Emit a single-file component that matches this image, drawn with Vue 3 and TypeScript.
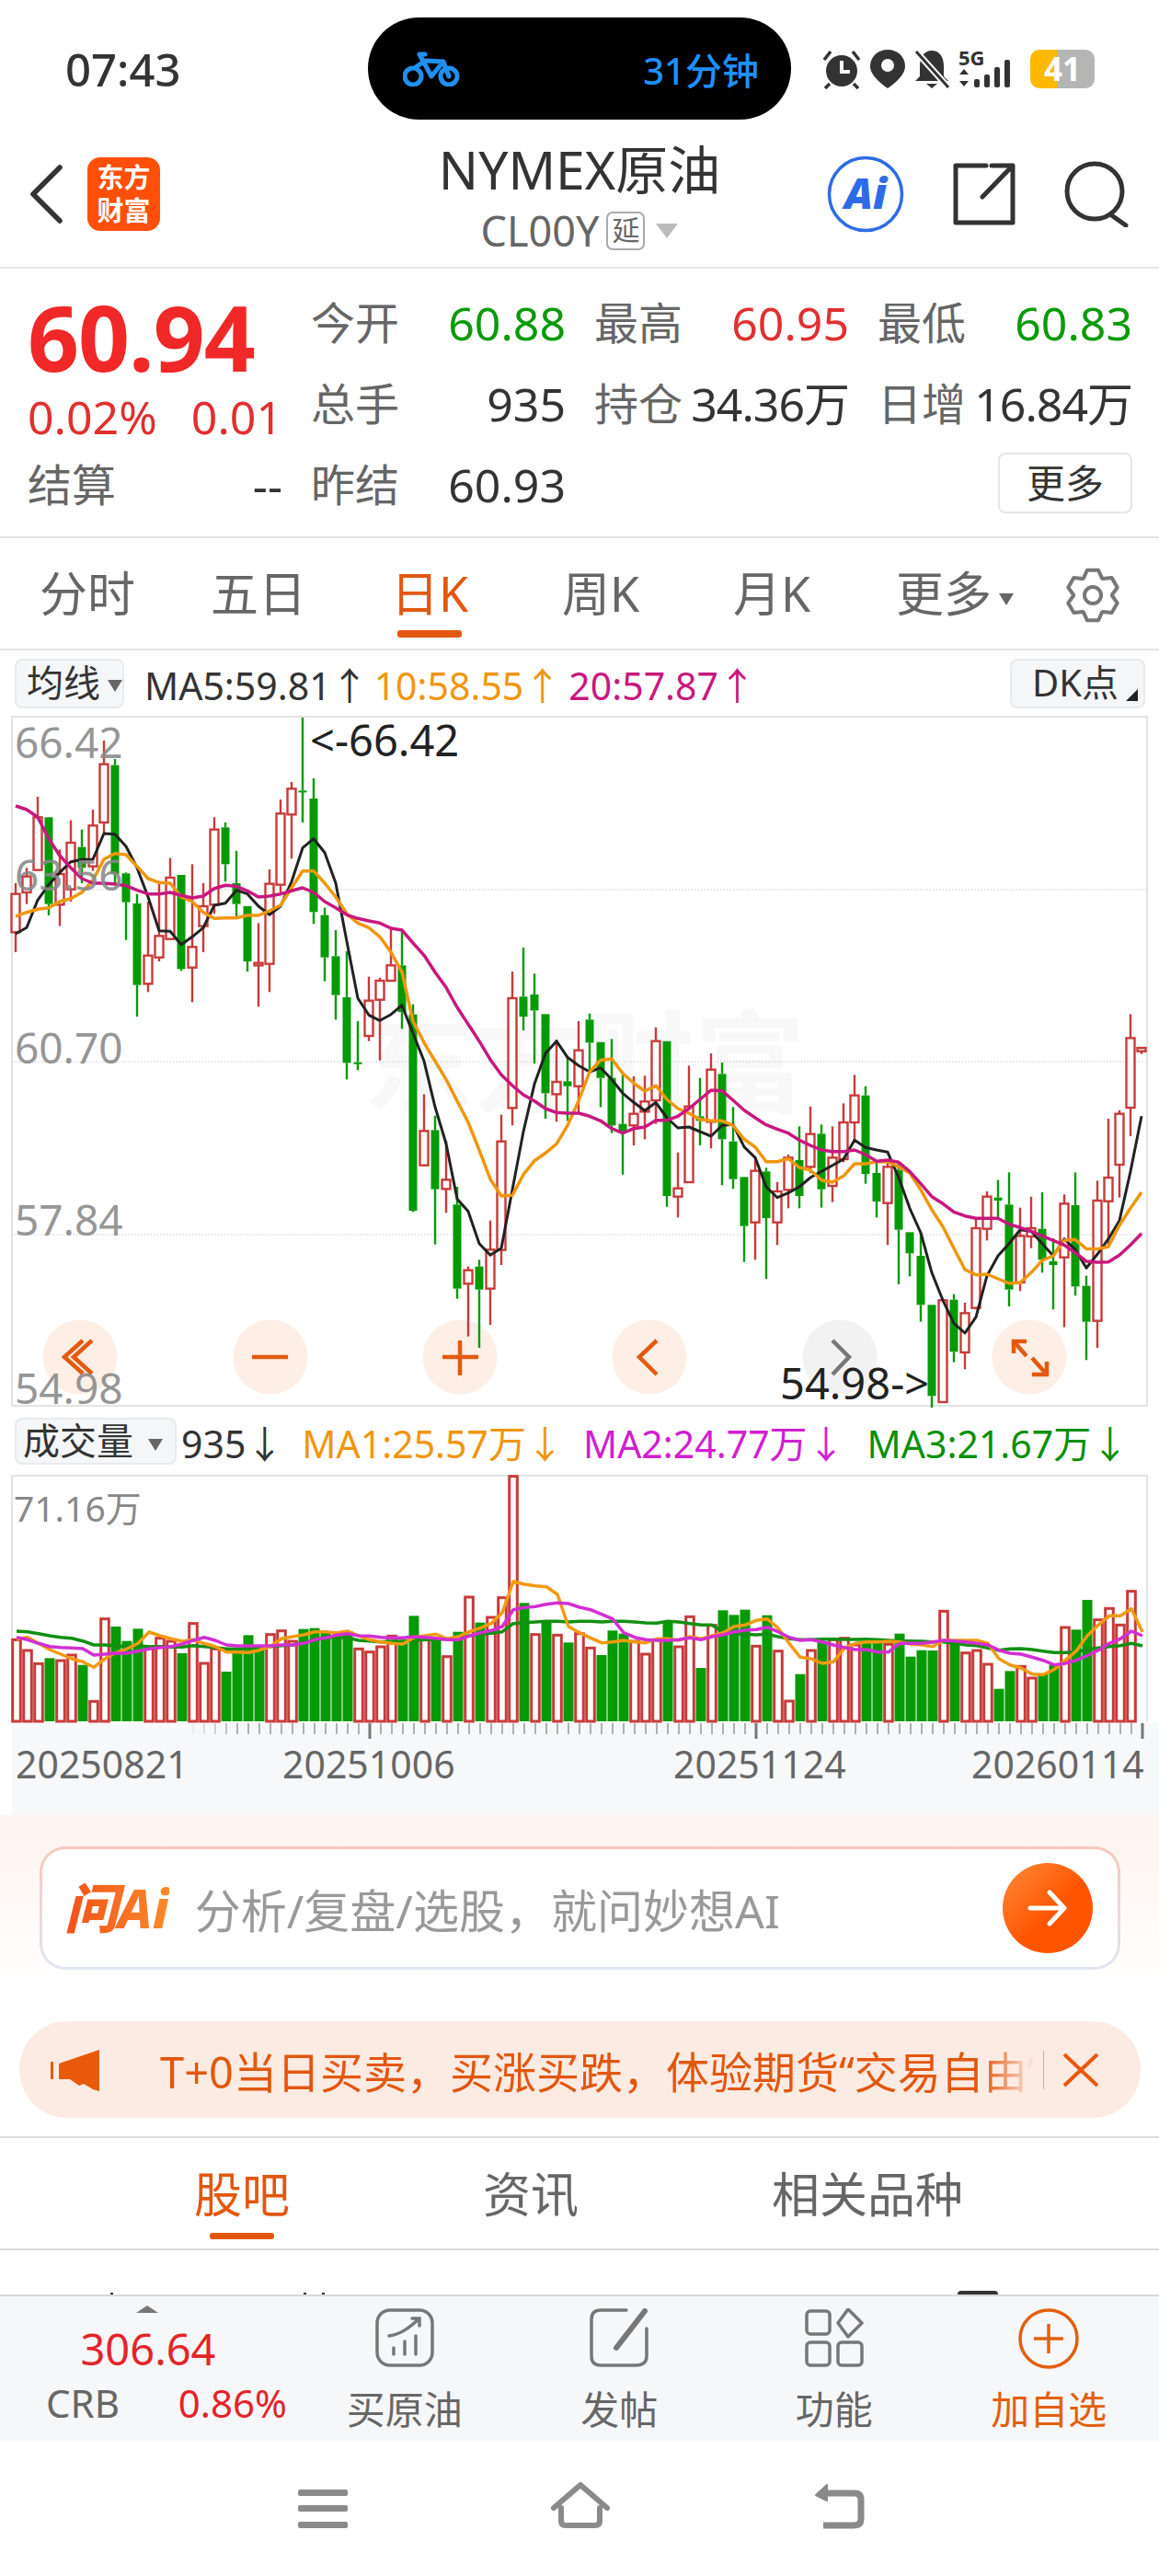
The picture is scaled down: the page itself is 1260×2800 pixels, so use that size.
<script setup lang="ts">
// 日K数据：[涨跌, 最高, 实体上沿, 实体下沿, 最低]，坐标是图内纵向位置的3倍
type Candle = [number, number, number, number, number]

const candles: Candle[] = [
  [1,540,575,700,765],[1,490,518,570,608],[1,258,325,497,500],[0,325,325,608,645],[1,430,510,610,680],
  [1,335,408,560,600],[0,365,422,490,540],[1,300,352,485,500],[1,75,152,342,375],[0,135,155,510,540],
  [0,505,508,602,725],[0,575,606,872,975],[1,600,776,868,895],[1,540,712,782,795],[1,458,522,722,722],
  [0,513,513,820,826],[1,478,748,815,928],[1,540,615,680,765],[1,325,365,610,640],[0,342,358,478,535],
  [0,435,540,608,650],[0,615,615,795,828],[1,670,800,808,943],[1,495,542,803,895],[1,267,313,545,570],
  [1,210,232,316,460],[0,0,238,240,342],[0,198,264,634,673],[0,620,644,782,860],[0,693,778,905,985],
  [0,762,912,1126,1180],[0,990,1124,1127,1150],[1,845,923,1038,1055],[1,848,858,920,1118],[1,685,808,858,860],
  [0,690,808,960,1015],[0,935,968,1608,1612],[1,1228,1348,1460,1460],[0,1298,1345,1538,1718],[1,1380,1507,1537,1615],
  [0,1530,1588,1862,1895],[1,1790,1802,1846,2018],[0,1768,1790,1865,2055],[1,1640,1735,1862,1980],[1,1295,1382,1736,1785],
  [1,828,915,1273,1330],[0,750,910,975,1020],[0,835,903,955,1128],[0,967,967,1225,1308],[1,1050,1188,1228,1318],
  [0,1110,1186,1202,1315],[1,990,1085,1202,1290],[0,965,985,1060,1160],[0,1058,1058,1175,1270],[0,1048,1175,1330,1355],
  [0,1165,1325,1350,1490],[1,1170,1292,1330,1395],[1,1168,1252,1285,1375],[1,1010,1055,1248,1325],[0,1055,1055,1560,1595],
  [1,1418,1535,1562,1630],[1,1135,1268,1515,1515],[0,1175,1300,1315,1395],[1,1095,1148,1318,1405],[0,1125,1162,1375,1525],
  [0,1270,1382,1505,1537],[0,1498,1498,1658,1775],[1,1440,1478,1646,1768],[0,1468,1480,1632,1830],[1,1515,1545,1646,1720],
  [1,1425,1435,1540,1600],[0,1333,1443,1560,1600],[1,1268,1358,1465,1485],[0,1327,1357,1538,1598],[1,1333,1435,1527,1580],
  [1,1258,1320,1440,1450],[1,1165,1232,1320,1380],[0,1202,1232,1488,1520],[0,1450,1485,1578,1630],[1,1450,1465,1583,1720],
  [0,1450,1475,1670,1848],[0,1678,1678,1747,1822],[0,1680,1755,1915,1970],[0,1915,1915,2212,2250],[1,1900,1900,2232,2232],
  [0,1880,1898,2068,2102],[1,1908,1942,2070,2125],[1,1630,1665,1925,1930],[1,1545,1562,1667,1705],[0,1508,1565,1575,1630],
  [0,1483,1588,1865,1920],[1,1598,1690,1842,1870],[1,1562,1665,1692,1730],[0,1548,1667,1768,1810],[0,1698,1773,1785,1930],
  [1,1555,1585,1760,1988],[0,1483,1590,1855,1885],[0,1820,1853,1970,2095],[1,1510,1575,1967,2055],[1,1308,1500,1577,1730],
  [1,1280,1292,1458,1565],[1,967,1045,1272,1365],[1,1077,1077,1088,1097],
]

const ma5 = [705,685,595,545,505,470,463,462,378,380,420,490,585,695,697,740,715,685,612,605,563,575,615,643,615,535,425,395,440,540,730,915,970,988,968,938,1030,1120,1270,1390,1570,1610,1715,1753,1730,1540,1350,1195,1095,1055,1108,1135,1155,1142,1180,1225,1255,1282,1255,1305,1338,1335,1350,1365,1330,1327,1400,1435,1530,1565,1550,1530,1500,1480,1460,1440,1378,1402,1410,1417,1500,1600,1680,1810,1900,1975,2007,1955,1820,1755,1715,1670,1675,1715,1755,1700,1735,1795,1750,1700,1640,1480,1300]
const ma10 = [648,635,625,620,600,590,570,530,462,443,447,485,525,538,540,585,600,635,655,653,653,645,645,630,612,555,500,500,540,585,640,670,685,715,765,830,990,1060,1120,1180,1250,1320,1410,1505,1560,1558,1490,1445,1420,1390,1330,1250,1155,1117,1113,1160,1192,1218,1200,1245,1275,1290,1310,1315,1315,1330,1375,1400,1448,1448,1438,1467,1475,1508,1515,1495,1455,1455,1448,1448,1465,1485,1540,1605,1660,1730,1800,1817,1815,1830,1845,1843,1810,1770,1755,1705,1702,1732,1733,1725,1655,1600,1548]
const ma20 = [288,300,325,395,450,490,525,540,540,543,548,563,575,575,570,580,588,582,557,547,550,565,585,582,575,565,555,570,600,620,643,655,663,670,687,693,735,775,830,880,945,1000,1055,1115,1165,1200,1230,1250,1275,1288,1290,1290,1300,1315,1340,1355,1340,1335,1313,1313,1300,1275,1245,1215,1217,1248,1280,1305,1328,1342,1355,1378,1395,1410,1415,1415,1410,1425,1447,1443,1450,1480,1520,1562,1585,1612,1625,1633,1633,1633,1652,1663,1675,1690,1705,1720,1745,1773,1776,1775,1753,1720,1682]

// 成交量：正数为阳量，负数为阴量
const volumes = [575,610,653,-638,643,625,-660,776,507,-535,-582,-542,600,570,580,-622,522,652,605,-682,-605,-563,-600,558,546,580,-543,-540,-555,-570,-550,605,615,598,563,-590,-500,570,-580,630,-552,436,-522,502,438,42,-458,558,-520,560,-587,555,602,-628,-548,-558,580,622,575,-520,598,500,-670,528,-482,-497,-480,596,-498,612,775,-690,610,-585,575,570,592,-585,-585,590,-558,-633,-612,-613,482,-590,618,610,655,-738,-680,662,700,-690,-660,535,-545,-448,510,473,527,417]
const volMa1 = [575,570,590,610,625,640,650,668,640,620,608,590,553,565,575,583,578,590,600,618,618,620,612,600,575,568,562,552,552,556,550,565,578,585,590,592,570,565,560,575,568,552,540,525,490,388,397,402,405,430,535,555,572,588,585,580,585,588,575,575,580,568,575,565,555,535,530,515,510,540,590,635,640,655,650,605,590,585,585,583,585,592,595,600,580,580,580,580,590,640,660,670,690,692,675,645,615,565,530,500,500,477,553]
const volMa2 = [570,578,590,600,603,605,607,628,625,622,622,615,608,603,600,592,580,570,580,595,598,598,598,598,595,595,590,578,572,563,558,565,566,570,572,572,568,570,573,578,578,566,555,548,535,480,473,470,462,458,460,472,480,495,510,555,570,578,580,580,578,572,578,568,562,552,547,545,537,552,570,580,578,585,595,603,610,610,618,618,590,590,590,585,580,582,585,590,595,612,622,625,635,645,660,655,645,630,612,590,575,550,565]
const volMa3 = [550,552,558,565,570,573,582,595,595,598,600,598,600,600,602,602,597,600,603,608,608,607,605,600,597,595,588,580,570,570,572,580,582,585,583,583,580,578,577,575,570,565,560,557,552,525,522,520,518,518,520,518,518,520,518,518,520,523,524,518,520,525,530,530,552,558,560,562,560,568,575,578,578,576,576,577,577,576,578,580,582,582,583,585,585,590,595,597,605,612,608,607,610,615,620,620,618,610,605,600,597,590,598]

const candleX = (i: number) => 17 + 12 * i
const candleY = (z: number) => 2 + z / 3
const volX = (i: number) => 18 + 12 * i
const volY = (z: number) => (z - 40) / 3

const linePoints = (values: number[], x: (i: number) => number, y: (z: number) => number) =>
  values.map((v, i) => `${x(i)},${y(v).toFixed(1)}`).join(' ')

const klineLines = [
  { color: '#222', width: 3, points: linePoints(ma5, candleX, candleY) },
  { color: '#f0960e', width: 3.5, points: linePoints(ma10, candleX, candleY) },
  { color: '#c8187f', width: 3.5, points: linePoints(ma20, candleX, candleY) },
]
const volLines = [
  { color: '#128f12', points: linePoints(volMa3, volX, volY) },
  { color: '#f39a10', points: linePoints(volMa1, volX, volY) },
  { color: '#d22fd2', points: linePoints(volMa2, volX, volY) },
]

const yLabels = [
  { text: '66.42', y: 46 },
  { text: '63.56', y: 190 },
  { text: '60.70', y: 378 },
  { text: '57.84', y: 565 },
  { text: '54.98', y: 748 },
]
const gridLines = [189, 376, 564]
const zoomButtons = [87, 294, 500, 706, 913, 1119]

// 时间轴刻度
const ticks = Array.from({ length: 87 }, (_, n) => {
  const i = n + 16
  const major = i === 32 || i === 67 || i === 102
  return { x: volX(i), major, opacity: n < 4 ? 0.15 + n * 0.2 : 1 }
})
const dates = ['20250821', '20251006', '20251124', '20260114']

// 设置图标的齿轮外形
const gearPath = (() => {
  const parts: string[] = []
  for (let t = 0; t < 6; t++) {
    const a = (t * Math.PI) / 3 - Math.PI / 2
    const pt = (r: number, d: number) =>
      `${(30 + r * Math.cos(a + d)).toFixed(1)} ${(30 + r * Math.sin(a + d)).toFixed(1)}`
    parts.push(`${t ? 'L' : 'M'}${pt(21, -0.5)} L${pt(28, -0.22)} L${pt(28, 0.22)} L${pt(21, 0.5)}`)
  }
  return parts.join(' ') + 'Z'
})()

const periodTabs = ['分时', '五日', '日K', '周K', '月K']
</script>

<template>
  <div class="page">
    <!-- 状态栏 -->
    <div class="status">
      <div class="clock">07:43</div>
      <div class="pill">
        <svg width="62" height="38" viewBox="0 0 62 38" fill="none" stroke="#2090f0" stroke-width="5" stroke-linejoin="round" stroke-linecap="round">
          <circle cx="11" cy="27" r="9" />
          <circle cx="50" cy="27" r="9" />
          <path d="M18 3 L31 27 L44 11 L50 27 M14 17 L24 10 L44 11 M18 3 H24" />
        </svg>
        <span>31分钟</span>
      </div>
      <div class="status-icons">
        <svg width="44" height="44" viewBox="0 0 44 44">
          <circle cx="22" cy="24" r="17" fill="#333" />
          <path d="M22 13 V25 H31" fill="none" stroke="#fff" stroke-width="4" />
          <path d="M3 12 L10 3 M41 12 L34 3 M9 38 L4 43 M35 38 L40 43" stroke="#333" stroke-width="3.5" />
        </svg>
        <svg width="38" height="42" viewBox="0 0 38 42">
          <path d="M19 0 C8 0 0 8 0 18 C0 30 19 42 19 42 S38 30 38 18 C38 8 30 0 19 0Z" fill="#333" />
          <circle cx="19" cy="17" r="7" fill="#fff" />
        </svg>
        <svg width="40" height="44" viewBox="0 0 40 44">
          <path d="M20 2 C11 2 7 10 7 19 V30 L2 35 H38 L33 30 V19 C33 10 29 2 20 2Z" fill="#333" />
          <path d="M14 38 H26 L20 43Z" fill="#333" />
          <path d="M3 3 L38 42" stroke="#fff" stroke-width="7" />
          <path d="M3 3 L38 42" stroke="#333" stroke-width="3" />
        </svg>
        <svg class="signal" width="66" height="44" viewBox="0 0 66 44">
          <text x="0" y="18" class="signal-text">5G</text>
          <path d="M6 22 L11 28 H1Z M6 41 L11 35 H1Z" fill="#333" />
          <rect x="17" y="33" width="6" height="9" rx="2" fill="#333" />
          <rect x="28" y="28" width="6" height="14" rx="2" fill="#333" />
          <rect x="39" y="20" width="6" height="22" rx="2" fill="#333" />
          <rect x="50" y="12" width="6" height="30" rx="2" fill="#333" />
        </svg>
        <div class="battery">41</div>
      </div>
    </div>

    <!-- 标题栏 -->
    <div class="nav">
      <div class="nav-left">
        <svg width="40" height="66" viewBox="0 0 40 66" fill="none" stroke="#333" stroke-width="5.5" stroke-linecap="round" stroke-linejoin="round">
          <path d="M35 4 L6 33 L35 62" />
        </svg>
        <div class="logo">东方<br />财富</div>
      </div>
      <div class="nav-title">
        <div class="title">NYMEX原油</div>
        <div class="code">
          <span>CL00Y</span>
          <span class="delay">延</span>
          <span class="code-arrow"></span>
        </div>
      </div>
      <div class="nav-right">
        <svg width="84" height="84" viewBox="0 0 84 84">
          <circle cx="42" cy="42" r="39.5" fill="none" stroke="#2e6be6" stroke-width="3.5" />
          <text x="42" y="58" text-anchor="middle" class="ai-text">Ai</text>
        </svg>
        <svg width="68" height="70" viewBox="0 0 68 70" fill="none" stroke="#333" stroke-width="5" stroke-linejoin="round" stroke-linecap="round">
          <path d="M36 4 H3 V66 H65 V4 H42 M65 4 L32 38" />
        </svg>
        <svg width="70" height="72" viewBox="0 0 70 72" fill="none" stroke="#333" stroke-width="5" stroke-linecap="round">
          <ellipse cx="33" cy="33" rx="30" ry="30" />
          <path d="M50 58 L67 70" />
        </svg>
      </div>
    </div>

    <!-- 行情 -->
    <div class="quote">
      <div class="quote-left">
        <div class="price">60.94</div>
        <div class="change"><span>0.02%</span><span>0.01</span></div>
        <div class="settle"><span class="label">结算</span><span>--</span></div>
      </div>
      <div class="quote-grid">
        <div class="cell"><span class="label">今开</span><span class="down">60.88</span></div>
        <div class="cell"><span class="label">最高</span><span class="up">60.95</span></div>
        <div class="cell"><span class="label">最低</span><span class="down">60.83</span></div>
        <div class="cell"><span class="label">总手</span><span>935</span></div>
        <div class="cell"><span class="label">持仓</span><span class="tight">34.36万</span></div>
        <div class="cell"><span class="label">日增</span><span class="tight">16.84万</span></div>
        <div class="cell"><span class="label">昨结</span><span>60.93</span></div>
        <div></div>
        <div class="cell cell-end"><button class="more">更多</button></div>
      </div>
    </div>

    <!-- 周期切换 -->
    <div class="periods">
      <div v-for="tab in periodTabs" :key="tab" class="period" :class="{ active: tab === '日K' }">
        <span>{{ tab }}</span>
        <i v-if="tab === '日K'"></i>
      </div>
      <div class="period period-more"><span>更多<b class="mini-arrow"></b></span></div>
      <svg class="gear" width="60" height="60" viewBox="0 0 60 60" fill="none" stroke="#777" stroke-width="4" stroke-linejoin="round">
        <path :d="gearPath" />
        <circle cx="30" cy="30" r="9" />
      </svg>
    </div>

    <!-- 均线 -->
    <div class="ma-bar">
      <div class="select">均线<b class="mini-arrow"></b></div>
      <span class="ma black">MA5:59.81↑</span>
      <span class="ma orange">10:58.55↑</span>
      <span class="ma pink">20:57.87↑</span>
      <div class="select dk">DK点<i class="corner"></i></div>
    </div>

    <!-- K线图 -->
    <svg class="kline" width="1260" height="752" viewBox="0 0 1260 752">
      <rect x="13" y="1" width="1234" height="749" fill="#fff" stroke="#e3e3e3" stroke-width="2" />
      <text x="395" y="422" class="watermark">东方财富</text>
      <line v-for="y in gridLines" :key="y" x1="13" x2="1246" :y1="y" :y2="y" stroke="#c8c8c8" stroke-dasharray="1.5 2" />

      <circle v-for="(x, i) in zoomButtons" :key="x" :cx="x" cy="697" r="40.5" :fill="i === 4 ? '#f2f2f2' : '#fdeee6'" />

      <g v-for="(c, i) in candles" :key="i">
        <line :x1="candleX(i)" :x2="candleX(i)" :y1="candleY(c[1])" :y2="candleY(c[2])" :stroke="c[0] ? '#c93a3a' : '#069a06'" stroke-width="2.4" />
        <line :x1="candleX(i)" :x2="candleX(i)" :y1="candleY(c[3])" :y2="candleY(c[4])" :stroke="c[0] ? '#c93a3a' : '#069a06'" stroke-width="2.4" />
        <rect
          v-if="c[0]"
          :x="candleX(i) - 4.5"
          :y="candleY(c[2])"
          width="9"
          :height="(c[3] - c[2]) / 3"
          fill="#fff"
          stroke="#c93a3a"
          stroke-width="2.4"
        />
        <rect v-else :x="candleX(i) - 4.5" :y="candleY(c[2])" width="9" :height="Math.max((c[3] - c[2]) / 3, 2)" fill="#069a06" />
      </g>

      <polyline v-for="l in klineLines" :key="l.color" :points="l.points" fill="none" :stroke="l.color" :stroke-width="l.width" stroke-linejoin="round" />

      <g fill="none" stroke="#e25a10" stroke-width="4.5">
        <path d="M90 679 L70 697 L90 715 M100 679 L80 697 L100 715" />
        <path d="M274 697 H313" />
        <path d="M481 697 H520 M500 679 V717" />
        <path d="M714 679 L695 697 L714 716" />
        <path d="M1102 693 V680 H1116 M1102 680 L1116 696 M1138 702 V716 H1122 M1138 716 L1122 698" />
      </g>
      <path d="M905 679 L923 697 L905 716" fill="none" stroke="#777" stroke-width="4.5" />

      <text v-for="l in yLabels" :key="l.text" x="16" :y="l.y" class="axis-label">{{ l.text }}</text>
      <text x="337" y="44" class="mark-label">&lt;-66.42</text>
      <text x="848" y="743" class="mark-label">54.98-&gt;</text>
    </svg>

    <!-- 成交量 -->
    <div class="vol-bar">
      <div class="select vol-select">成交量<b class="mini-arrow"></b></div>
      <span class="ma black">935↓</span>
      <span class="ma orange">MA1:25.57万↓</span>
      <span class="ma violet">MA2:24.77万↓</span>
      <span class="ma green">MA3:21.67万↓</span>
    </div>
    <svg class="volume" width="1260" height="270" viewBox="0 0 1260 270">
      <path d="M13 269 V1 H1247 V269" fill="none" stroke="#e3e3e3" stroke-width="2" />
      <text x="15" y="51" class="vol-label">71.16万</text>
      <template v-for="(v, i) in volumes" :key="i">
        <rect v-if="v > 0" :x="volX(i) - 4.3" :y="volY(v) + 1" width="8.6" :height="267 - volY(v)" fill="#fff" stroke="#c93a3a" stroke-width="3" />
        <rect v-else :x="volX(i) - 5.5" :y="volY(-v)" width="11" :height="268 - volY(-v)" fill="#069a06" />
      </template>
      <polyline v-for="l in volLines" :key="l.color" :points="l.points" fill="none" :stroke="l.color" stroke-width="3.5" stroke-linejoin="round" />
    </svg>

    <!-- 时间轴 -->
    <div class="axis">
      <svg class="ticks" width="1247" height="17" viewBox="13 0 1247 17">
        <line
          v-for="t in ticks"
          :key="t.x"
          :x1="t.x"
          :x2="t.x"
          y1="0"
          :y2="t.major ? 17 : 12"
          :stroke="t.major ? '#777' : '#999'"
          :stroke-width="t.major ? 3 : 1.5"
          :opacity="t.opacity"
        />
      </svg>
      <div class="dates">
        <span v-for="d in dates" :key="d">{{ d }}</span>
      </div>
    </div>

    <!-- 问AI -->
    <div class="ask">
      <div class="ask-box">
        <span class="ask-logo">问Ai</span>
        <span class="ask-text">分析/复盘/选股，就问妙想AI</span>
        <div class="ask-go">
          <svg width="44" height="44" viewBox="0 0 44 44" fill="none" stroke="#fff" stroke-width="5" stroke-linecap="round" stroke-linejoin="round">
            <path d="M3 22 H40 M24 5 L40 22 L24 39" />
          </svg>
        </div>
      </div>
    </div>

    <!-- 公告 -->
    <div class="notice">
      <svg width="56" height="46" viewBox="0 0 56 46" fill="#e8590c">
        <path d="M9 16 L53 1 V46 L46 44 L36 38 L31 40 L21 33 H9Z" />
        <rect x="0" y="14" width="3" height="19" />
      </svg>
      <div class="notice-text">T+0当日买卖，买涨买跌，体验期货“交易自由”</div>
      <i class="notice-sep"></i>
      <svg width="40" height="38" viewBox="0 0 40 38" fill="none" stroke="#e8590c" stroke-width="4">
        <path d="M2 2 L38 36 M38 2 L2 36" />
      </svg>
    </div>

    <!-- 股吧 -->
    <div class="tabs">
      <div class="tab active">股吧<i></i></div>
      <div class="tab">资讯</div>
      <div class="tab">相关品种</div>
    </div>
    <div class="peek">
      <i class="s1"></i>
      <i class="s2"></i>
      <i class="s3"></i>
      <i class="s4"></i>
    </div>

    <!-- 底部工具栏 -->
    <div class="toolbar">
      <div class="index">
        <i class="index-arrow"></i>
        <div class="index-value">306.64</div>
        <div class="index-row"><span>CRB</span><span class="index-pct">0.86%</span></div>
      </div>
      <div class="tool">
        <svg width="64" height="64" viewBox="0 0 64 64" fill="none" stroke="#777" stroke-width="3.5" stroke-linecap="round">
          <rect x="2" y="2" width="60" height="60" rx="14" />
          <path d="M15 30 C28 28 36 22 48 11 M40 11 H48 V19 M20 50 V43 M32 50 V36 M44 50 V30" />
        </svg>
        <span>买原油</span>
      </div>
      <div class="tool">
        <svg width="64" height="64" viewBox="0 0 64 64" fill="none" stroke="#777" stroke-width="3.5" stroke-linecap="round">
          <path d="M40 2 H12 Q2 2 2 12 V52 Q2 62 12 62 H50 Q62 62 62 52 V22" />
          <path d="M60 3 L29 43" stroke-width="6" />
        </svg>
        <span>发帖</span>
      </div>
      <div class="tool">
        <svg width="64" height="64" viewBox="0 0 64 64" fill="none" stroke="#777" stroke-width="3.5" stroke-linejoin="round">
          <rect x="2" y="3" width="25" height="25" rx="4" />
          <path d="M47 1 L62 16 L47 31 L36 16Z" />
          <rect x="2" y="37" width="25" height="25" rx="4" />
          <rect x="36" y="37" width="26" height="25" rx="4" />
        </svg>
        <span>功能</span>
      </div>
      <div class="tool tool-active">
        <svg width="66" height="66" viewBox="0 0 66 66" fill="none" stroke="#e2600f" stroke-width="3.5">
          <circle cx="33" cy="33" r="31" />
          <path d="M17 33 H49 M33 17 V49" />
        </svg>
        <span>加自选</span>
      </div>
    </div>

    <!-- 系统导航 -->
    <div class="sysnav">
      <svg width="54" height="52" viewBox="0 0 54 52" fill="#8a8a8a">
        <rect y="8" width="54" height="7" rx="2" />
        <rect y="25" width="54" height="7" rx="2" />
        <rect y="43" width="54" height="7" rx="2" />
      </svg>
      <svg width="66" height="52" viewBox="0 0 66 52" fill="none" stroke="#8a8a8a" stroke-width="6" stroke-linecap="round" stroke-linejoin="round">
        <path d="M4 28 L33 3 L62 28 M12 28 V42 Q12 47 17 47 H49 Q54 47 54 42 V28" />
      </svg>
      <svg width="56" height="52" viewBox="0 0 56 52" fill="none" stroke="#8a8a8a" stroke-width="7" stroke-linejoin="round">
        <path d="M11 47 H44 Q52 47 52 40 V19 Q52 12 45 12 H8" />
        <path d="M15 3 L3 14 L15 20Z" fill="#8a8a8a" stroke-width="2" />
      </svg>
    </div>
  </div>
</template>

<style scoped>
.page {
  width: 1260px;
  height: 2800px;
  overflow: hidden;
  background: #fff;
  color: #333;
  font-family: 'Noto Sans', 'Noto Sans CJK SC', sans-serif;
}

/* 状态栏 */
.status {
  height: 150px;
  display: grid;
  grid-template-columns: 400px 460px 1fr;
  align-items: center;
}
.clock {
  padding-left: 71px;
  font-size: 49px;
  font-weight: 500;
  color: #333;
}
.pill {
  height: 111px;
  margin-top: -1px;
  border-radius: 56px;
  background: #000;
  color: #1e90ff;
  display: flex;
  align-items: center;
  justify-content: space-between;
  padding: 0 35px 0 38px;
  font-size: 40px;
  font-weight: 500;
}
.status-icons {
  display: flex;
  align-items: center;
  padding-left: 33px;
  gap: 9px;
}
.signal-text {
  font-size: 22px;
  font-weight: 700;
  fill: #333;
}
.battery {
  width: 70px;
  height: 42px;
  margin-left: 3px;
  border-radius: 10px;
  background: linear-gradient(90deg, #fcb900 42%, #b5b5b5 42%);
  color: #fff;
  font-size: 35px;
  font-weight: 700;
  line-height: 42px;
  text-align: center;
}

/* 标题栏 */
.nav {
  height: 142px;
  border-bottom: 2px solid #e5e5e5;
  box-sizing: border-box;
  display: grid;
  grid-template-columns: 1fr auto 1fr;
}
.nav-left {
  display: flex;
  align-items: center;
  gap: 25px;
  padding: 0 0 18px 30px;
}
.logo {
  width: 79px;
  height: 80px;
  border-radius: 14px;
  background: #ff4f08;
  color: #fff;
  font-size: 29px;
  font-weight: 700;
  line-height: 36px;
  text-align: center;
  padding-top: 4px;
  box-sizing: border-box;
}
.nav-title {
  text-align: center;
}
.title {
  font-size: 57px;
  line-height: 68px;
  color: #333;
}
.code {
  margin-top: 11px;
  height: 44px;
  display: flex;
  align-items: center;
  justify-content: center;
  font-size: 45px;
  line-height: 44px;
  color: #666;
}
.delay {
  width: 42px;
  height: 42px;
  margin-left: 8px;
  box-sizing: border-box;
  border: 2px solid #aaa;
  border-radius: 7px;
  font-size: 30px;
  line-height: 36px;
  text-align: center;
}
.code-arrow {
  margin-left: 12px;
  border: 12px solid transparent;
  border-top: 16px solid #bbb;
  border-bottom: 0;
}
.nav-right {
  display: flex;
  align-items: center;
  justify-content: flex-end;
  gap: 53px;
  padding: 0 33px 18px 0;
}
.ai-text {
  font-size: 46px;
  font-weight: 900;
  font-style: italic;
  fill: #2e6be6;
}

/* 行情 */
.quote {
  height: 291px;
  padding-left: 30px;
  display: flex;
  font-size: 50px;
}
.quote-left {
  width: 277px;
  flex: none;
  padding-top: 24px;
  line-height: 60px;
}
.price {
  font-size: 98px;
  line-height: 100px;
  font-weight: 700;
  letter-spacing: -1px;
  color: #f02828;
}
.change {
  margin-top: 7px;
  display: flex;
  justify-content: space-between;
  color: #e03030;
}
.settle {
  margin-top: 14px;
  display: flex;
  justify-content: space-between;
}
.quote-grid {
  margin-left: 31px;
  padding-top: 15px;
  display: grid;
  grid-template-columns: repeat(3, 277px);
  grid-auto-rows: 88px;
  column-gap: 31px;
  line-height: 88px;
}
.cell {
  display: flex;
  justify-content: space-between;
  white-space: nowrap;
}
.cell-end {
  justify-content: flex-end;
  align-items: center;
}
.label {
  color: #666;
  font-size: 48px;
}
.tight {
  letter-spacing: -1px;
}
.up {
  color: #e03030;
}
.down {
  color: #0a9a0a;
}
.more {
  width: 146px;
  height: 66px;
  margin-top: -4px;
  padding: 0;
  background: #fff;
  border: 2px solid #e6e6e6;
  border-radius: 8px;
  font: inherit;
  font-size: 42px;
  line-height: 60px;
  color: #333;
}

/* 周期切换 */
.periods {
  height: 124px;
  box-sizing: border-box;
  border-top: 2px solid #e2e2e2;
  border-bottom: 2px solid #e2e2e2;
  padding-left: 2px;
  display: flex;
  font-size: 52px;
  color: #666;
}
.period {
  width: 186px;
  display: flex;
  flex-direction: column;
  align-items: center;
  padding-top: 28px;
  line-height: 64px;
}
.period i {
  width: 70px;
  height: 8px;
  margin-top: 8px;
  border-radius: 3px;
  background: #e2570f;
}
.period.active {
  color: #e2570f;
}
.period-more {
  padding-left: 26px;
  box-sizing: border-box;
}
.mini-arrow {
  display: inline-block;
  margin-left: 8px;
  vertical-align: middle;
  border: 8px solid transparent;
  border-top: 13px solid #666;
  border-bottom: 0;
}
.gear {
  margin: 32px 0 0 auto;
  margin-right: 42px;
}

/* 均线与成交量条 */
.ma-bar,
.vol-bar {
  display: flex;
  align-items: center;
  font-size: 41px;
}
.ma-bar {
  height: 71px;
  padding: 0 15px 0 16px;
}
.vol-bar {
  height: 73px;
  padding-left: 16px;
}
.select {
  box-sizing: border-box;
  height: 54px;
  border: 2px solid #e9eaec;
  border-radius: 8px;
  background: #f5f6f8;
  padding-left: 11px;
  font-size: 40px;
  line-height: 48px;
  color: #333;
  white-space: nowrap;
}
.ma {
  white-space: nowrap;
}
.ma-bar .black {
  margin-left: 22px;
}
.orange {
  color: #f0960e;
  margin-left: 6px;
}
.pink {
  color: #c8187f;
  margin-left: 8px;
}
.dk {
  position: relative;
  width: 147px;
  margin-left: auto;
  padding-left: 22px;
}
.corner {
  position: absolute;
  right: 6px;
  bottom: 6px;
  border-left: 13px solid transparent;
  border-bottom: 13px solid #222;
}
.kline,
.volume {
  display: block;
}
.watermark {
  font-size: 120px;
  font-weight: 700;
  fill: #f8f8f8;
}
.axis-label {
  font-size: 46px;
  fill: #888;
  fill-opacity: 0.9;
}
.mark-label {
  font-size: 47px;
  fill: #222;
}
.vol-select {
  width: 176px;
  height: 51px;
  line-height: 45px;
  flex: none;
  padding-left: 7px;
}
.vol-select .mini-arrow {
  margin-left: 16px;
}
.vol-bar .black {
  margin-left: 5px;
}
.vol-bar .orange {
  margin-left: 20px;
}
.violet {
  color: #d020d0;
  margin-left: 21px;
}
.green {
  color: #0a8f0a;
  margin-left: 24px;
}
.vol-label {
  font-size: 39px;
  fill: #888;
}

/* 时间轴 */
.axis {
  height: 100px;
  margin-left: 13px;
  background: #f7f8fa;
}
.ticks {
  display: block;
}
.dates {
  display: grid;
  grid-template-columns: 290px 425px 324px auto;
  padding-left: 4px;
  font-size: 41px;
  line-height: 54px;
  color: #666;
}

/* 问AI */
.ask {
  height: 224px;
  box-sizing: border-box;
  padding: 34px 42px 0 43px;
  background: linear-gradient(#fff3ee, #fff 85%);
}
.ask-box {
  height: 134px;
  box-sizing: border-box;
  border: 3px solid transparent;
  border-radius: 28px;
  background: linear-gradient(#fff, #fff) padding-box, linear-gradient(#f8c6bc, #dfe6f2) border-box;
  display: flex;
  align-items: center;
  padding: 0 27px 0 24px;
}
.ask-logo {
  font-size: 58px;
  line-height: 60px;
  font-weight: 800;
  font-style: italic;
  background: linear-gradient(90deg, #f4501a, #f98a2a);
  -webkit-background-clip: text;
  background-clip: text;
  color: transparent;
}
.ask-text {
  margin-left: 28px;
  font-size: 50px;
  color: #999;
  white-space: nowrap;
}
.ask-go {
  width: 98px;
  height: 98px;
  margin-left: auto;
  border-radius: 50%;
  background: linear-gradient(315deg, #ff5500 45%, #ff8c3a);
  display: flex;
  align-items: center;
  justify-content: center;
}

/* 公告 */
.notice {
  height: 105px;
  margin: 0 20px 0 21px;
  padding-left: 34px;
  border-radius: 52px;
  background: #fcebe3;
  display: flex;
  align-items: center;
}
.notice-text {
  width: 951px;
  flex: none;
  margin-left: 63px;
  overflow: hidden;
  white-space: nowrap;
  font-size: 47px;
  color: #e2570f;
  -webkit-mask-image: linear-gradient(90deg, #000 94%, transparent 100%);
  mask-image: linear-gradient(90deg, #000 94%, transparent 100%);
}
.notice-sep {
  width: 1px;
  height: 42px;
  flex: none;
  margin: 0 20px 0 9px;
  background: #e8a37f;
}

/* 股吧 */
.tabs {
  height: 124px;
  margin-top: 20px;
  box-sizing: border-box;
  border-top: 2px solid #dcdcdc;
  border-bottom: 2px solid #dcdcdc;
  padding-left: 211px;
  display: flex;
  gap: 210px;
  font-size: 52px;
  color: #666;
}
.tab {
  padding-top: 29px;
  line-height: 64px;
}
.tab.active {
  color: #e2570f;
}
.tab i {
  display: block;
  width: 70px;
  height: 7px;
  margin: 10px auto 0;
  border-radius: 3px;
  background: #e2570f;
}
.peek {
  height: 48px;
  display: flex;
  align-items: flex-end;
}
.peek i {
  background: #333;
  height: 2px;
  width: 3px;
}
.peek .s1 {
  margin-left: 120px;
}
.peek .s2 {
  margin-left: 207px;
}
.peek .s3 {
  margin-left: 17px;
}
.peek .s4 {
  margin-left: 688px;
  width: 44px;
  height: 4px;
  border-radius: 4px 4px 0 0;
}

/* 底部工具栏 */
.toolbar {
  height: 159px;
  box-sizing: border-box;
  border-top: 2px solid #d8d8d8;
  background: #f6f7f9;
  display: grid;
  grid-template-columns: 323px repeat(4, 233.5px);
}
.index {
  width: 312px;
  box-sizing: border-box;
  padding: 10px 0 0 50px;
}
.index-arrow {
  display: block;
  width: 0;
  margin-left: 98px;
  border: 12px solid transparent;
  border-bottom: 8px solid #777;
  border-top: 0;
}
.index-value {
  width: 222px;
  margin-top: 9px;
  font-size: 47px;
  line-height: 60px;
  text-align: center;
  color: #e3242b;
}
.index-row {
  margin-top: 4px;
  display: flex;
  justify-content: space-between;
  font-size: 42px;
  line-height: 50px;
  color: #666;
}
.index-pct {
  color: #e3242b;
}
.tool {
  display: flex;
  flex-direction: column;
  align-items: center;
  padding-top: 13px;
  font-size: 42px;
  line-height: 50px;
  color: #666;
}
.tool span {
  margin-top: 21px;
}
.tool-active {
  color: #e2600f;
}
.tool-active span {
  margin-top: 19px;
}

/* 系统导航 */
.sysnav {
  height: 147px;
  box-sizing: border-box;
  padding: 45px 0 0 324px;
  display: flex;
  align-items: flex-start;
  gap: 220px;
}
</style>

<style>
body {
  background: #fff;
}
</style>
